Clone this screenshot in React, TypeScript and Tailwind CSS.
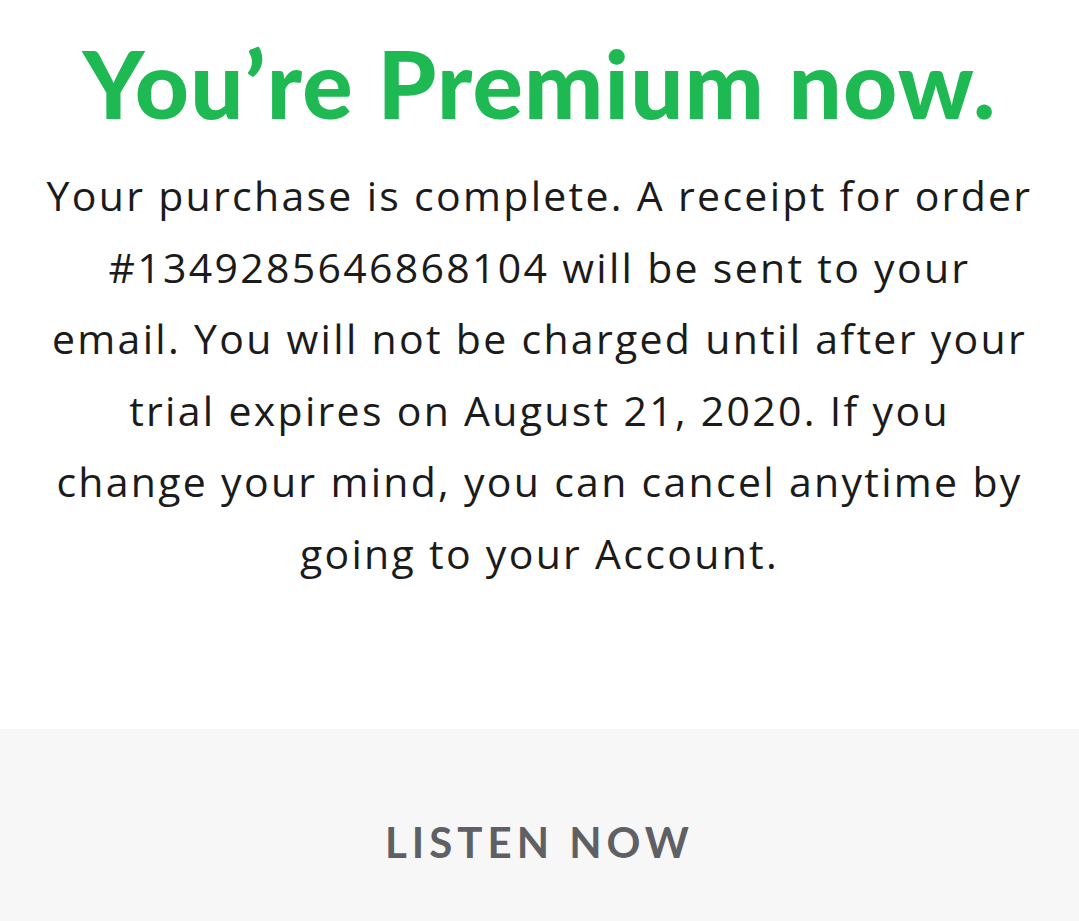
export default function App() {
  const lines = [
    "Your purchase is complete. A receipt for order",
    "#1349285646868104 will be sent to your",
    "email. You will not be charged until after your",
    "trial expires on August 21, 2020. If you",
    "change your mind, you can cancel anytime by",
    "going to your Account.",
  ]

  return (
    <div className="w-[1079px] h-[921px] flex flex-col bg-white">
      <div className="h-[729px] flex flex-col items-center pt-[30px]">
        <h1 className="font-['Lato',sans-serif] text-[#1fb954] font-black text-[94px] leading-[105px] tracking-[1.2px]">
          You’re Premium now.
        </h1>
        <p className="mt-[25px] font-['Open_Sans',sans-serif] text-[#1b1b1b] text-[41px] leading-[71.6px] tracking-[2.3px] text-center">
          {lines.map((l) => (
            <span key={l} className="block whitespace-nowrap">
              {l}
            </span>
          ))}
        </p>
      </div>
      <div className="flex-1 bg-[#f7f7f7] flex items-center justify-center pt-[34px]">
        <span className="font-['Lato',sans-serif] text-[#5f6063] font-bold text-[42px] tracking-[5px]">
          LISTEN NOW
        </span>
      </div>
    </div>
  )
}
